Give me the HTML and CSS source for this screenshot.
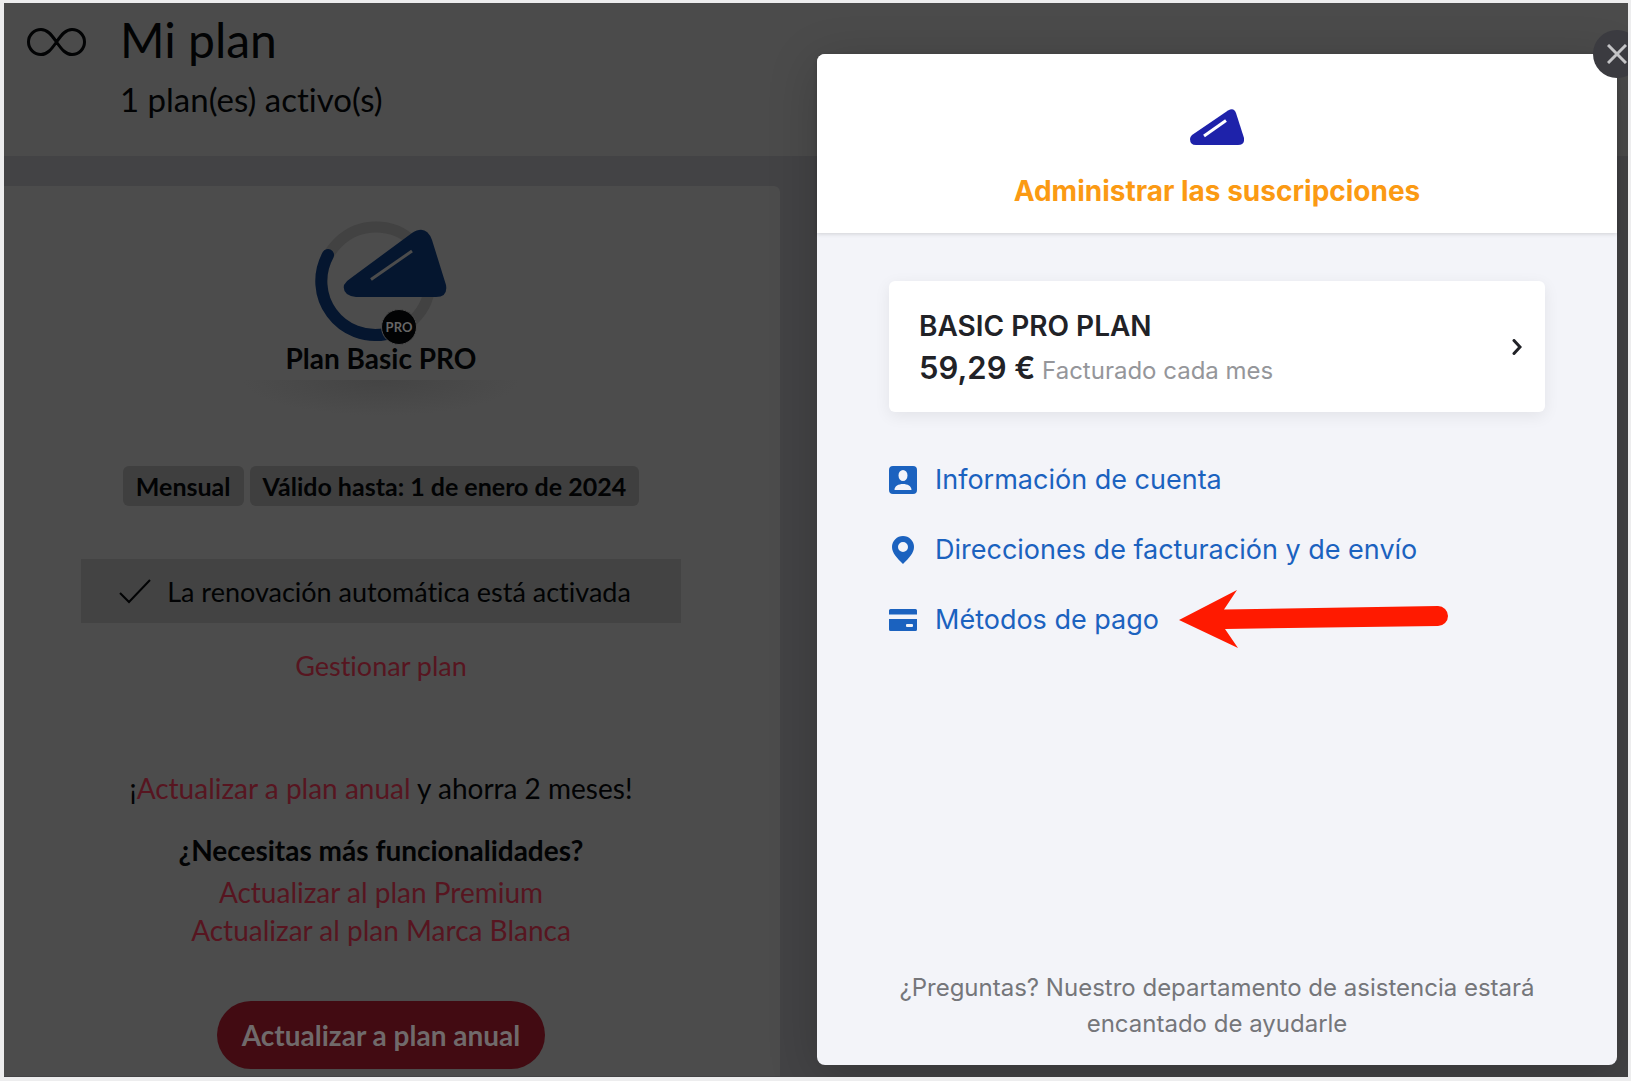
FILE: index.html
```html
<!DOCTYPE html>
<html lang="es">
<head>
<meta charset="utf-8">
<title>Mi plan</title>
<link rel="stylesheet" href="styles.css">
</head>
<body>
<div class="app">
  <header class="page-head">
    <svg class="infinity" viewBox="0 0 60 30" aria-hidden="true"><path d="M30.500 15C25 7 21 2.500 15 2.500a12.500 12.500 0 0 0 0 25c6 0 10-4.500 15.500-12.500S40 2.500 46 2.500a12.500 12.500 0 0 1 0 25c-6 0-10-4.500-15.500-12.500z"/></svg>
    <div>
      <h1>Mi plan</h1>
      <p class="subtitle">1 plan(es) activo(s)</p>
    </div>
  </header>

  <main class="plan-card">
    <section class="plan-id">
      <svg class="plan-logo" viewBox="0 0 132 120" aria-hidden="true">
        <circle class="ring" cx="61" cy="60" r="54"/>
        <path class="ring-on" d="M13 34A54 54 0 0 0 71 113"/>
        <path class="sail" d="M36 57L97 12Q111 3 117 19L131 64Q133 76 121 76L41 76Q27 74 29 64Q31 60 36 57z"/>
        <path class="sail-line" d="M56 58.500L97 30"/>
        <circle class="pro-dot" cx="84" cy="106" r="17.500"/>
        <text x="84" y="111" text-anchor="middle">PRO</text>
      </svg>
      <h2>Plan Basic PRO</h2>
      <div class="plan-shadow"></div>
    </section>
    <div class="badges"><span>Mensual</span><span>Válido hasta: 1 de enero de 2024</span></div>
    <p class="renewal">
      <svg viewBox="0 0 32 26" aria-hidden="true"><path d="M1 15L10 24L31 2"/></svg>
      La renovación automática está activada
    </p>
    <a class="manage" href="#plan">Gestionar plan</a>
    <p class="save">¡<a href="#anual">Actualizar a plan anual</a> y ahorra 2 meses!</p>
    <h3>¿Necesitas más funcionalidades?</h3>
    <a class="upgrade" href="#premium">Actualizar al plan Premium</a>
    <a class="upgrade" href="#marca-blanca">Actualizar al plan Marca Blanca</a>
    <button class="cta" type="button">Actualizar a plan anual</button>
  </main>

  <div class="portal" role="dialog" aria-labelledby="portal-title">
    <button class="close" type="button" aria-label="Cerrar"><svg viewBox="0 0 20 20" aria-hidden="true"><path d="M1 1L19 19M19 1L1 19"/></svg></button>
    <header class="portal-head">
      <svg class="brand" viewBox="0 0 54 36" aria-hidden="true"><path class="brand-sail" d="M2 26L38 1.500Q44-2 46 4L54 29Q55 36 48 36L6 36Q0 36 0 30Q0 28 2 26z"/><path class="brand-line" d="M14 27L36 11.500"/></svg>
      <h2 id="portal-title">Administrar las suscripciones</h2>
    </header>
    <div class="portal-body">
      <a class="subscription" href="#suscripcion">
        <span class="sub-text">
          <strong class="sub-name">BASIC PRO PLAN</strong>
          <span class="sub-price"><strong>59,29 €</strong> Facturado cada mes</span>
        </span>
        <svg viewBox="0 0 10 16" aria-hidden="true"><path d="M2 1.500L8 8L2 14.500"/></svg>
      </a>
      <nav class="links">
        <a href="#cuenta">
          <svg viewBox="0 0 28 28" aria-hidden="true"><path fill-rule="evenodd" d="M4 0h20a4 4 0 0 1 4 4v20a4 4 0 0 1-4 4H4a4 4 0 0 1-4-4V4a4 4 0 0 1 4-4zM14 4a4.500 5.500 0 0 0 0 11a4.500 5.500 0 0 0 0-11zM5.500 24h17c0-4-4-6-8.500-6s-8.500 2-8.500 6z"/></svg>
          Información de cuenta</a>
        <a href="#direcciones">
          <svg viewBox="0 0 28 28" aria-hidden="true"><path fill-rule="evenodd" d="M14 0a11 11 0 0 1 11 11c0 6-5 11-11 17C8 22 3 17 3 11A11 11 0 0 1 14 0zM14 6a5 5 0 0 0 0 10a5 5 0 0 0 0-10z"/></svg>
          Direcciones de facturación y de envío</a>
        <a href="#pago">
          <svg viewBox="0 0 28 28" aria-hidden="true"><path fill-rule="evenodd" d="M1.500 3h25a1.500 1.500 0 0 1 1.500 1.500v4H0v-4A1.500 1.500 0 0 1 1.500 3zM0 13h28v10.500a1.500 1.500 0 0 1-1.500 1.500h-25A1.500 1.500 0 0 1 0 23.500zM18 18a1 1 0 0 0-1 1v1a1 1 0 0 0 1 1h5a1 1 0 0 0 1-1v-1a1 1 0 0 0-1-1z"/></svg>
          Métodos de pago
          <svg class="pointer" viewBox="0 0 270 60" aria-hidden="true"><path d="M0 30L58 0L45 19.500L259 16A10 10 0 0 1 259 36L46 39L59 58z"/></svg>
        </a>
      </nav>
      <p class="help">¿Preguntas? Nuestro departamento de asistencia estará encantado de ayudarle</p>
    </div>
  </div>
</div>
</body>
</html>
```
FILE: styles.css
```css
* { box-sizing: border-box; margin: 0; padding: 0; }
html, body { height: 100%; }
body {
  padding: 3px 3px 4px 4px;
  background: #ededee;
  font-family: Lato, "Open Sans", sans-serif;
  font-size: 28px;
  font-variant-ligatures: none;
  color: #020304;
}
a { color: #571520; text-decoration: none; }
button { border: 0; font: inherit; cursor: pointer; }
svg { flex: none; fill: none; }

.app {
  position: relative;
  height: 100%;
  overflow: hidden;
  background: #434345;
}

.page-head {
  display: flex;
  gap: 34px;
  height: 153px;
  padding: 7px 22px;
  background: #4b4b4b;
}
.infinity { width: 60px; height: 30px; margin-top: 17px; stroke: #020304; stroke-width: 3; }
h1 { font-size: 48px; line-height: 60px; font-weight: 400; }
.subtitle { font-size: 33px; line-height: 40px; margin-top: 9px; }

.plan-card {
  display: flex;
  flex-direction: column;
  align-items: center;
  width: 776px;
  margin-top: 30px;
  padding: 35px 22px 7px 0;
  border-radius: 0 6px 0 0;
  background: #4c4c4c;
}
.plan-id { display: flex; flex-direction: column; align-items: center; }
.plan-logo { width: 132px; height: 120px; overflow: visible; }
.ring { stroke: #424242; stroke-width: 11; }
.ring-on { stroke: #05162f; stroke-width: 12; stroke-linecap: round; }
.sail { fill: #05162f; }
.sail-line { stroke: #4c4c4c; stroke-width: 3; }
.pro-dot { fill: #020304; stroke: #4c4c4c; stroke-width: 1; }
.plan-logo text { fill: #666; font: 700 13px Lato, sans-serif; }
.plan-id h2 { font-size: 28px; line-height: 34px; }
.plan-shadow {
  width: 280px;
  height: 36px;
  margin-top: 5px;
  background: radial-gradient(ellipse at top, #444, #4c4c4c 70%);
}
.badges { display: flex; gap: 6px; margin-top: 50px; }
.badges span {
  padding: 0 13px;
  border-radius: 6px;
  background: #3f3f3f;
  font-size: 25px;
  line-height: 40px;
  font-weight: 700;
}
.renewal {
  display: flex;
  justify-content: center;
  align-items: center;
  gap: 16px;
  width: 600px;
  height: 64px;
  margin-top: 53px;
  padding-right: 12px;
  background: #434343;
  font-size: 27px;
}
.renewal svg { width: 32px; height: 26px; stroke: #020304; stroke-width: 2; }
.manage { font-size: 27px; line-height: 38px; margin-top: 24px; }
.save { line-height: 38px; margin-top: 84px; }
h3 { font-size: 28px; line-height: 38px; margin-top: 24px; }
.upgrade { line-height: 38px; }
h3 + .upgrade { margin-top: 4px; }
.cta {
  height: 68px;
  margin-top: 52px;
  padding: 0 25px;
  border-radius: 34px;
  background: #420b12;
  color: #706a6b;
  font-weight: 700;
}

.portal {
  position: absolute;
  top: 51px;
  right: 11px;
  bottom: 12px;
  display: flex;
  flex-direction: column;
  width: 800px;
  border-radius: 8px;
  background: #f3f4f9;
  box-shadow: 0 10px 50px rgba(0, 0, 0, .2);
  font-family: Inter, "Liberation Sans", sans-serif;
}
.close {
  position: absolute;
  top: -24px;
  right: -24px;
  display: grid;
  place-items: center;
  width: 48px;
  height: 48px;
  border-radius: 50%;
  background: #3b3b40;
}
.close svg { width: 20px; height: 20px; stroke: #c4c4c6; stroke-width: 3; }
.portal-head {
  display: flex;
  flex-direction: column;
  align-items: center;
  height: 179px;
  padding-top: 55px;
  border-radius: 8px 8px 0 0;
  background: #fff;
  box-shadow: 0 1px 4px rgba(0, 0, 0, .15);
}
.brand { width: 54px; height: 36px; }
.brand-sail { fill: #1e22aa; }
.brand-line { stroke: #fff; stroke-width: 3; }
.portal-head h2 { margin-top: 28px; font-size: 28px; line-height: 36px; font-weight: 700; color: #fb9a13; }
.portal-body { flex: 1; display: flex; flex-direction: column; padding: 48px 72px 23px; }
.subscription {
  display: flex;
  align-items: center;
  justify-content: space-between;
  height: 131px;
  padding: 0 23px 0 30px;
  border-radius: 6px;
  background: #fff;
  box-shadow: 0 4px 16px rgba(0, 0, 0, .07);
  color: #212227;
}
.sub-text { padding-top: 8px; }
.sub-name { display: block; font-size: 28px; line-height: 36px; font-weight: 600; }
.sub-price { display: block; margin-top: 2px; font-size: 24px; line-height: 44px; color: #95969a; }
.sub-price strong { font-size: 31px; font-weight: 600; color: #212227; }
.subscription svg { width: 10px; height: 16px; stroke: #212227; stroke-width: 3; stroke-linecap: round; }
.links { display: flex; flex-direction: column; gap: 30px; margin-top: 48px; }
.links a { display: flex; align-items: center; gap: 18px; font-size: 27px; line-height: 40px; color: #1b62bf; }
.links svg { width: 28px; height: 28px; fill: #1b62bf; }
.links .pointer { width: 270px; height: 60px; margin: -10px 2px; fill: #ff1a00; }
.help { margin-top: auto; font-size: 24px; line-height: 36px; text-align: center; color: #75767a; }
```
